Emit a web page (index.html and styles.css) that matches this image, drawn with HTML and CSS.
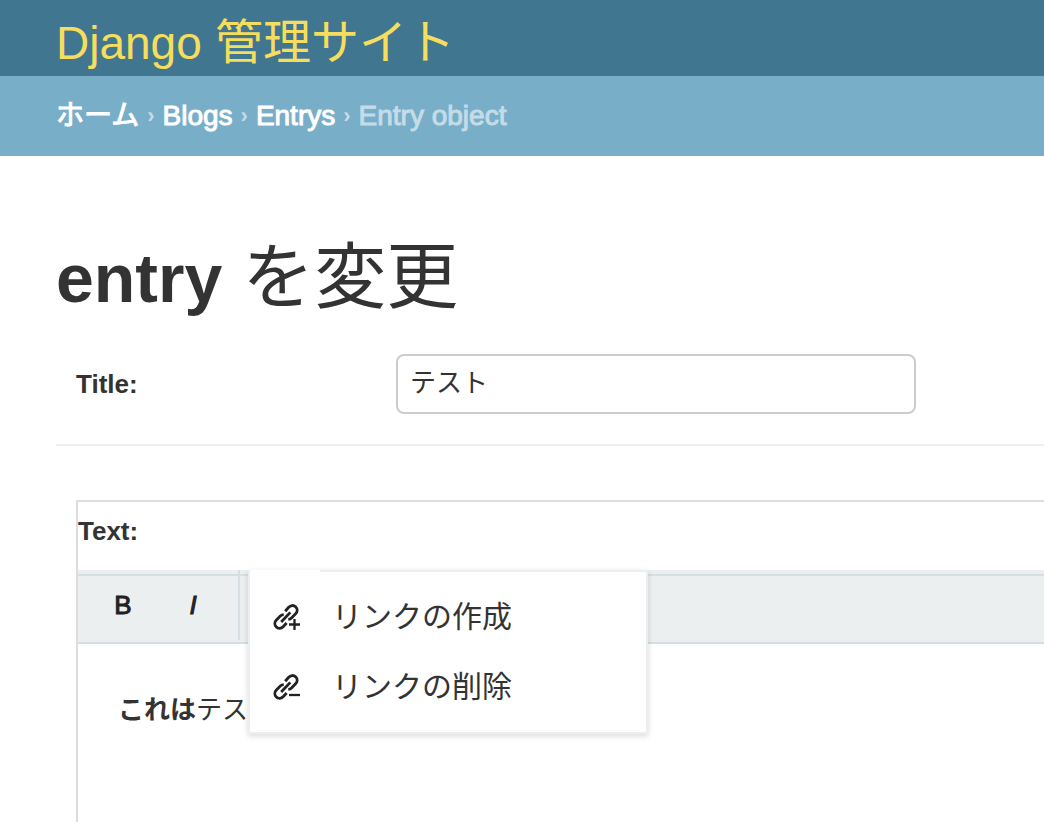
FILE: index.html
```
<!DOCTYPE html>
<html lang="ja">
<head>
<meta charset="utf-8">
<meta name="viewport" content="width=device-width, initial-scale=1">
<title>entry を変更 | Django 管理サイト</title>
<link rel="stylesheet" href="styles.css">
</head>
<body>
<header class="header">
  <div class="site-name"><span class="site-name-latin">Django</span> 管理サイト</div>
</header>
<nav class="breadcrumbs" aria-label="breadcrumbs">
  <a href="#">ホーム</a><span class="sep">›</span><a href="#">Blogs</a><span class="sep">›</span><a href="#">Entrys</a><span class="sep">›</span><span class="current">Entry object</span>
</nav>
<main class="content">
  <h1 class="page-title"><span class="model-name">entry</span> を変更</h1>
  <form>
    <div class="form-row">
      <label class="field-label" for="title">Title:</label>
      <input class="text-input" id="title" type="text" value="テスト">
    </div>
    <div class="editor">
      <div class="field-label editor-label" id="text-label">Text:</div>
      <div class="toolbar">
        <div class="tool-group">
          <button class="tool" type="button">B</button>
          <button class="tool tool-italic" type="button">I</button>
        </div>
        <div class="menu">
          <button class="menu-item" type="button">
            <svg class="menu-icon" viewBox="0 0 28 28" aria-hidden="true">
              <g class="chain"><path d="M13.200 8.200L16.700 4.300C18.500 2.300 21.500 1.800 23.600 3.800C25.800 5.900 25.500 8.800 23.600 10.800L19.500 14.900Q18.300 16.100 16.300 16.300"/><path d="M11.700 11.600Q9.700 11.700 8.300 13L4.400 17C2.400 19 2.300 22 4.300 24C6.300 26 9.300 25.700 11.100 23.800L14.600 20"/><path d="M9.200 19L18.300 9.400"/></g>
              <path class="sign" d="M17 21.500h11M22.500 16v11"/>
            </svg>
            <span>リンクの作成</span>
          </button>
          <button class="menu-item" type="button">
            <svg class="menu-icon" viewBox="0 0 28 28" aria-hidden="true">
              <g class="chain"><path d="M13.200 8.200L16.700 4.300C18.500 2.300 21.500 1.800 23.600 3.800C25.800 5.900 25.500 8.800 23.600 10.800L19.500 14.900Q18.300 16.100 16.300 16.300"/><path d="M11.700 11.600Q9.700 11.700 8.300 13L4.400 17C2.400 19 2.300 22 4.300 24C6.300 26 9.300 25.700 11.100 23.800L14.600 20"/><path d="M9.200 19L18.300 9.400"/></g>
              <path class="sign" d="M17 22h11"/>
            </svg>
            <span>リンクの削除</span>
          </button>
        </div>
      </div>
      <div class="editor-body" contenteditable="true" role="textbox" aria-multiline="true" aria-labelledby="text-label"><strong>これは</strong>テスト</div>
    </div>
  </form>
</main>
</body>
</html>
```
FILE: styles.css
```
* {
  box-sizing: border-box;
}

body {
  margin: 0;
  min-height: 100vh;
  display: flex;
  flex-direction: column;
  background: #fff;
  color: #333;
  font-family: "Liberation Sans", "Noto Sans CJK JP", sans-serif;
}

button,
input {
  font-family: inherit;
  color: inherit;
}

.header {
  height: 76px;
  padding: 8px 56px;
  background: #417690;
}

.site-name {
  color: #f5dd5d;
  font-size: 48px;
  font-weight: 400;
  line-height: 70px;
  white-space: nowrap;
}

.site-name-latin {
  font-size: 46px;
}

.breadcrumbs {
  display: flex;
  gap: 8px;
  align-items: center;
  height: 80px;
  padding: 0 56px;
  background: #79aec8;
  color: #c4dce8;
  font-size: 28px;
  line-height: 40px;
  white-space: nowrap;
}

.breadcrumbs a {
  color: #fff;
  text-decoration: none;
  -webkit-text-stroke: 1px #fff;
}

.sep {
  font-size: 22px;
  font-weight: 700;
}

.current {
  -webkit-text-stroke: 1px #c4dce8;
}

.content {
  display: flex;
  flex: 1;
  flex-direction: column;
  padding: 75px 0 0 56px;
}

.content form {
  display: flex;
  flex: 1;
  flex-direction: column;
}

.page-title {
  margin: 0 0 12px;
  font-size: 72px;
  font-weight: 400;
  line-height: 92px;
}

.model-name {
  font-size: 68px;
  font-weight: 700;
}

.form-row {
  display: flex;
  align-items: center;
  padding: 18px 20px 30px;
  border-bottom: 2px solid #eee;
}

.field-label {
  width: 320px;
  font-size: 26px;
  font-weight: 700;
  line-height: 36px;
}

.text-input {
  width: 520px;
  height: 60px;
  padding: 0 12px 8px;
  border: 2px solid #ccc;
  border-radius: 8px;
  background: #fff;
  font-size: 26px;
}

.editor {
  display: flex;
  flex: 1;
  flex-direction: column;
  margin: 54px 0 0 20px;
  border: solid #ddd;
  border-width: 2px 0 0 2px;
}

.editor-label {
  padding: 11px 0 21px;
}

.toolbar {
  position: relative;
  height: 74px;
  border-bottom: 2px solid #d5dfe3;
  background: linear-gradient(#d5dfe3, #d5dfe3) 0 4px / 100% 2px no-repeat #ebefef;
}

.tool-group {
  display: flex;
  width: 162px;
  height: 70px;
  padding-left: 10px;
  border-right: 2px solid #d5dfe3;
}

.tool {
  width: 70px;
  padding: 0;
  border: 0;
  background: none;
  color: #222;
  font-size: 26px;
  -webkit-text-stroke: 1px #222;
}

.tool-italic {
  font-style: italic;
}

.menu {
  position: absolute;
  top: 0;
  left: 170px;
  width: 400px;
  padding: 12px 0 10px;
  border: 2px solid #ebefef;
  border-top: 0;
  background: linear-gradient(#ebefef, #ebefef) 70px 0 / 100% 2px no-repeat #fff;
  box-shadow: 0 2px 6px rgba(0, 0, 0, 0.15);
}

.menu-item {
  display: flex;
  gap: 32px;
  align-items: center;
  width: 100%;
  height: 70px;
  padding: 0 22px;
  border: 0;
  background: none;
  font-size: 30px;
  line-height: 44px;
}

.menu-icon {
  width: 28px;
  height: 28px;
  fill: none;
  stroke: #222;
}

.chain {
  stroke-width: 2.8;
}

.sign {
  stroke-width: 2.3;
}

.editor-body {
  flex: 1;
  padding: 46px 40px;
  outline: none;
  font-size: 26px;
  line-height: 40px;
}
```
